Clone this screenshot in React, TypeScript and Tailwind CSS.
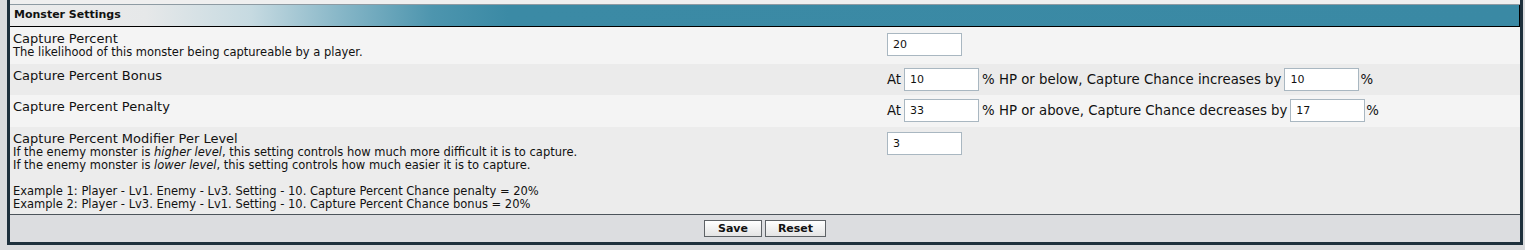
import React from 'react';

const font = "font-['DejaVu_Sans',Verdana,sans-serif]";

const Field: React.FC<{ value: string }> = ({ value }) => (
  <input
    defaultValue={value}
    className={`${font} w-[75px] h-[23px] bg-white border border-[#a9b7c1] pl-[5px] text-[11px] text-[#111] outline-none`}
  />
);

interface RowProps {
  title: string;
  bg: string;
  children: React.ReactNode;
  desc?: React.ReactNode;
  pad?: string;
  fieldPad?: string;
}

const Row: React.FC<RowProps> = ({ title, bg, desc, children, pad = 'pt-[4px] pb-[4px]', fieldPad = 'pt-[4px]' }) => (
  <div className={`flex ${bg}`}>
    <div className={`w-[873px] shrink-0 pl-[3px] ${pad}`}>
      <div className="text-[13px] leading-[15px] text-[#111]">{title}</div>
      {desc && <div className="text-[11.5px] leading-[13px] text-[#111]">{desc}</div>}
    </div>
    <div className={`flex-1 pl-[4px] ${fieldPad}`}>{children}</div>
  </div>
);

const App: React.FC = () => {
  return (
    <div className={`${font} w-[1525px] h-[250px] bg-[#dadbdd] pl-[7px] pr-[2px] pb-[4px]`}>
      <div className="border-l-[3px] border-r-[3px] border-b-[3px] border-[#1e303c] bg-[#f0f0f0]">
        <div className="h-[5px] bg-[#efefef] border-b border-[#8e9ba3]"></div>

        {/* header */}
        <div className="h-[22px] flex items-center pl-[4px] border-b border-black border-r bg-[linear-gradient(to_right,#ececec_0%,#e6e8e9_9%,#c6dae1_16%,#86b6c7_22%,#4d95ae_28%,#3b8aa5_33%,#3a89a4_100%)]">
          <span className="text-[11px] font-bold text-[#111]">Monster Settings</span>
        </div>

        <Row
          title="Capture Percent"
          bg="bg-[#f4f4f4]"
          pad="pt-[4px] pb-[5px]"
          desc="The likelihood of this monster being captureable by a player."
        >
          <Field value="20" />
        </Row>

        <Row title="Capture Percent Bonus" bg="bg-[#ebebeb]" fieldPad="pt-[4px] pb-[4px]">
          <div className="flex items-center text-[13.3px] text-[#111]">
            <span className="mr-[3px]">At</span>
            <Field value="10" />
            <span className="ml-[3px] mr-[3px]">% HP or below, Capture Chance increases by</span>
            <Field value="10" />
            <span className="ml-[1px]">%</span>
          </div>
        </Row>

        <Row title="Capture Percent Penalty" bg="bg-[#f4f4f4]" fieldPad="pt-[4px] pb-[5px]">
          <div className="flex items-center text-[13.3px] text-[#111]">
            <span className="mr-[3px]">At</span>
            <Field value="33" />
            <span className="ml-[3px] mr-[3px]">% HP or above, Capture Chance decreases by</span>
            <Field value="17" />
            <span className="ml-[1px]">%</span>
          </div>
        </Row>

        <Row
          title="Capture Percent Modifier Per Level"
          bg="bg-[#ececec]"
          pad="pt-[4px] pb-[3px]"
          fieldPad="pt-[3px]"
          desc={
            <>
              If the enemy monster is <i>higher level</i>, this setting controls how much more difficult it is to capture.
              <br />
              If the enemy monster is <i>lower level</i>, this setting controls how much easier it is to capture.
              <br />
              <br />
              Example 1: Player - Lv1. Enemy - Lv3. Setting - 10. Capture Percent Chance penalty = 20%
              <br />
              Example 2: Player - Lv3. Enemy - Lv1. Setting - 10. Capture Percent Chance bonus = 20%
            </>
          }
        >
          <Field value="3" />
        </Row>

        {/* footer */}
        <div className="h-[28px] border-t border-[#4c545b] bg-[#dcdde0] flex items-center justify-center gap-[3px]">
          <button className="w-[58px] h-[17px] border border-[#5e6266] bg-[linear-gradient(to_bottom,#ffffff,#e4e4e4)] text-[11px] font-bold text-[#111] leading-none">
            Save
          </button>
          <button className="w-[61px] h-[17px] border border-[#5e6266] bg-[linear-gradient(to_bottom,#ffffff,#e4e4e4)] text-[11px] font-bold text-[#111] leading-none">
            Reset
          </button>
        </div>
      </div>
    </div>
  );
};

export default App;
